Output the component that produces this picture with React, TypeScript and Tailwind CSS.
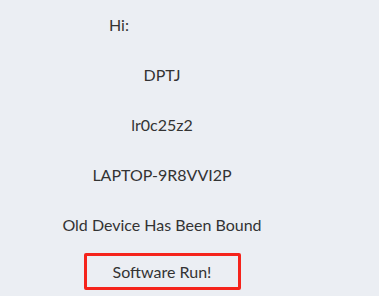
import React from 'react';

const App: React.FC = () => {
  const lines = ['DPTJ', 'lr0c25z2', 'LAPTOP-9R8VVI2P', 'Old Device Has Been Bound'];

  return (
    <div className="min-h-screen w-full bg-[#ebeef3] text-[#333] text-[16px] leading-[20px] font-['Lato','Open_Sans',sans-serif]">
      <div className="w-[324px] flex flex-col items-center pt-[15px]">
        <div className="w-full pl-[109px]">Hi:</div>
        {lines.map((line) => (
          <div key={line} className="mt-[30px]">{line}</div>
        ))}
        <div className="mt-[18px] w-[157px] h-[37px] border-[3px] border-[#f5231b] rounded-[2px] flex items-center justify-center">
          Software Run!
        </div>
      </div>
    </div>
  );
};

export default App;
